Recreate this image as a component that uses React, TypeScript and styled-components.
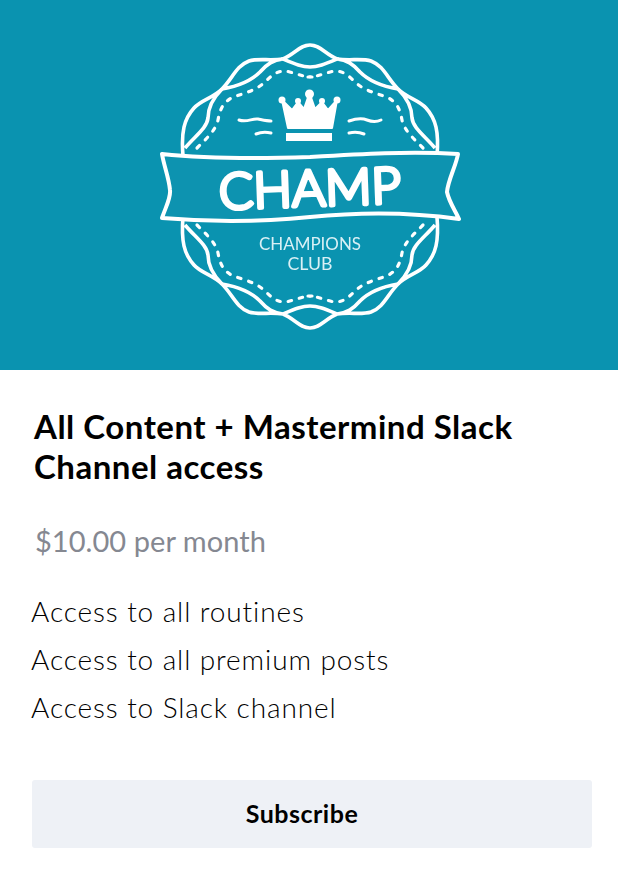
import React from 'react';
import styled, { createGlobalStyle } from 'styled-components';

const GlobalStyle = createGlobalStyle`
  html, body {
    margin: 0;
    padding: 0;
    background: #fff;
  }
`;

const Card = styled.div`
  width: 618px;
  height: 874px;
  overflow: hidden;
  font-family: Lato, "Open Sans", sans-serif;
  color: #000;
`;
const Banner = styled.div`
  height: 370px;
  background: #0a93b0;
`;
const BadgeSvg = styled.svg`
  display: block;
`;
const Body = styled.div`
  padding: 36px 26px 0 32px;
`;
const Title = styled.h2`
  margin: 0;
  padding-left: 2px;
  font-size: 33px;
  line-height: 40px;
  font-weight: 700;
  letter-spacing: 0.5px;
`;
const Price = styled.div`
  margin-top: 35px;
  padding-left: 3px;
  font-size: 29px;
  line-height: 40px;
  font-weight: 400;
  color: #858891;
  letter-spacing: 0.05px;
`;
const Features = styled.ul`
  list-style: none;
  margin: 26px 0 0 -1px;
  padding: 0;
`;
const Feature = styled.li`
  font-size: 28px;
  line-height: 48px;
  font-weight: 300;
  letter-spacing: 0.9px;
`;
const SubscribeButton = styled.button`
  display: block;
  width: 560px;
  height: 68px;
  margin-top: 49px;
  padding: 0 20px 3px 0;
  border: 0;
  border-radius: 3px;
  background: #eef1f6;
  color: #000;
  font-family: inherit;
  font-size: 25px;
  font-weight: 700;
  letter-spacing: 0.5px;
`;

const MIRROR_X = 'matrix(-1 0 0 1 620 0)';
const MIRROR_Y = 'matrix(1 0 0 -1 0 373)';
const MIRROR_XY = 'matrix(-1 0 0 -1 620 373)';

const Badge = () => (
  <BadgeSvg width="618" height="370" viewBox="0 0 618 370">
    <defs>
      <filter id="soft" x="-5%" y="-5%" width="110%" height="110%">
        <feGaussianBlur stdDeviation="0.7" />
      </filter>
      <g id="quarter" fill="none" stroke="#fff" strokeLinejoin="round">
        <path
          strokeWidth="3.6"
          d="M283 59C295 54 300 45 310 45M283 59C295 64 302 67 310 67"
        />
        <path
          strokeWidth="3.6"
          d="M283 59C270 61 258 58 249 61C236 66 233 78 222 89C240 86 252 80 260 72C267 64 273 60 283 59"
        />
        <path
          strokeWidth="3.6"
          d="M222 89C213 98 201 100 194 108C184 119 181 132 183 156M222 89C211 100 208 110 208 118C207 128 195 136 185 148"
        />
        <path
          strokeWidth="3.2"
          strokeLinecap="round"
          strokeDasharray="3.500 8"
          d="M197 148C207 138 216 130 218 120C220 110 222 103 233 97C245 93 258 90 267 80C273 74 278 71 285 71C293 72 302 77 312 77"
        />
      </g>
    </defs>
    <g filter="url(#soft)">
      <use href="#quarter" />
      <use href="#quarter" transform={MIRROR_X} />
      <use href="#quarter" transform={MIRROR_Y} />
      <use href="#quarter" transform={MIRROR_XY} />

      <path
        d="M162 154C200 158 250 159 310 157C360 154 410 151 458 154C456 166 448 180 447 192C449 202 455 210 459 219C410 212 360 212 310 217C260 222 210 222 162 218C166 206 171 198 170 190C169 178 164 166 162 154Z"
        fill="#0a93b0"
        stroke="#fff"
        strokeWidth="4"
        strokeLinejoin="round"
      />

      <path
        fill="#fff"
        stroke="#fff"
        strokeWidth="2"
        strokeLinejoin="round"
        d="M282 100L292 110L298 102L304 109L309.500 93L315 109L322 102L328 110L337 100L332 128L288 128Z"
      />
      <circle cx="282" cy="100" r="3.500" fill="#fff" />
      <circle cx="298" cy="101" r="3" fill="#fff" />
      <circle cx="309.500" cy="94" r="4.500" fill="#fff" />
      <circle cx="322" cy="101" r="3" fill="#fff" />
      <circle cx="337" cy="100" r="3.500" fill="#fff" />
      <rect x="286" y="133" width="46" height="8" fill="#fff" />

      <g fill="none" stroke="#fff" strokeWidth="3" strokeLinecap="round">
        <path d="M239 120C247 123 252 118 258 119C263 120 267 121 271 121" />
        <path d="M256 134C261 132 266 132 271 133" />
        <path d="M349 121C355 119 362 118 367 120C372 122 377 122 381 120" />
        <path d="M349 133C354 132 359 132 364 134" />
      </g>

      <text
        x="310"
        y="206"
        textAnchor="middle"
        transform="rotate(-2 310 190)"
        fontFamily="Lato, sans-serif"
        fontWeight="300"
        fontSize="50"
        textLength="182"
        lengthAdjust="spacingAndGlyphs"
        fill="#fff"
        stroke="#fff"
        strokeWidth="4.2"
        strokeLinejoin="round"
      >
        CHAMP
      </text>
      <text
        x="310"
        y="250"
        textAnchor="middle"
        fontFamily="Lato, sans-serif"
        fontWeight="400"
        fontSize="17"
        textLength="102"
        lengthAdjust="spacingAndGlyphs"
        fill="#d9f0f5"
      >
        CHAMPIONS
      </text>
      <text
        x="310"
        y="270"
        textAnchor="middle"
        fontFamily="Lato, sans-serif"
        fontWeight="400"
        fontSize="17"
        textLength="45"
        lengthAdjust="spacingAndGlyphs"
        fill="#d9f0f5"
      >
        CLUB
      </text>
    </g>
  </BadgeSvg>
);

const features = [
  'Access to all routines',
  'Access to all premium posts',
  'Access to Slack channel',
];

const App = () => (
  <>
    <GlobalStyle />
    <Card>
      <Banner>
        <Badge />
      </Banner>
      <Body>
        <Title>
          All Content + Mastermind Slack
          <br />
          Channel access
        </Title>
        <Price>$10.00 per month</Price>
        <Features>
          {features.map((f) => (
            <Feature key={f}>{f}</Feature>
          ))}
        </Features>
        <SubscribeButton>Subscribe</SubscribeButton>
      </Body>
    </Card>
  </>
);

export default App;
